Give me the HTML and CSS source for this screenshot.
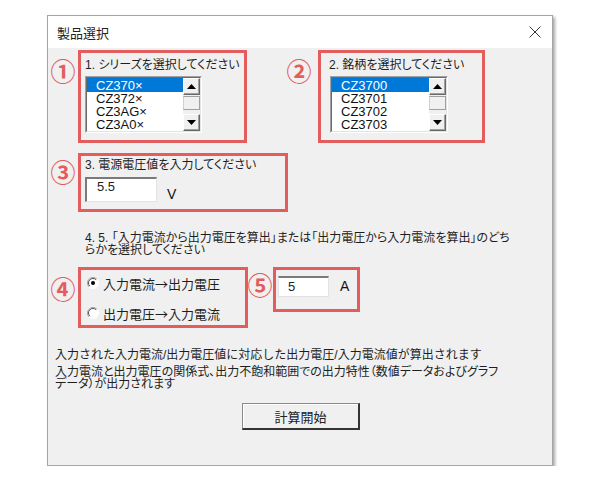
FILE: index.html
```html
<!DOCTYPE html>
<html lang="ja">
<head>
<meta charset="utf-8">
<title>製品選択</title>
<link rel="stylesheet" href="styles.css">
</head>
<body>
<div class="page">
  <div class="dialog">
    <div class="titlebar">
      <span class="title">製品選択</span>
      <svg class="close" width="12" height="12" viewBox="0 0 12 12"><path d="M0.5 0.5 L11.5 11.5 M11.5 0.5 L0.5 11.5" stroke="#333" stroke-width="1" fill="none"/></svg>
    </div>
    <div class="body">
      <div class="row row1">
        <span class="num num1">①</span>
        <div class="box box1">
          <div class="label">1. シリーズを選択してください</div>
          <div class="listbox">
            <div class="listbox-inner">
              <ul class="items">
                <li class="sel">CZ370×</li>
                <li>CZ372×</li>
                <li>CZ3AG×</li>
                <li>CZ3A0×</li>
              </ul>
              <div class="scrollbar">
                <div class="sbtn"><svg width="9" height="5" viewBox="0 0 9 5"><polygon points="4.5,0 9,5 0,5" fill="#000"/></svg></div>
                <div class="track"><div class="thumb"></div></div>
                <div class="sbtn"><svg width="9" height="5" viewBox="0 0 9 5"><polygon points="0,0 9,0 4.5,5" fill="#000"/></svg></div>
              </div>
            </div>
          </div>
        </div>
        <span class="num num2">②</span>
        <div class="box box2">
          <div class="label">2. 銘柄を選択してください</div>
          <div class="listbox listbox2">
            <div class="listbox-inner">
              <ul class="items">
                <li class="sel">CZ3700</li>
                <li>CZ3701</li>
                <li>CZ3702</li>
                <li>CZ3703</li>
              </ul>
              <div class="scrollbar">
                <div class="sbtn"><svg width="9" height="5" viewBox="0 0 9 5"><polygon points="4.5,0 9,5 0,5" fill="#000"/></svg></div>
                <div class="track"><div class="thumb"></div></div>
                <div class="sbtn"><svg width="9" height="5" viewBox="0 0 9 5"><polygon points="0,0 9,0 4.5,5" fill="#000"/></svg></div>
              </div>
            </div>
          </div>
        </div>
      </div>

      <div class="row row2">
        <span class="num num3">③</span>
        <div class="box box3">
          <div class="label">3. 電源電圧値を入力してください</div>
          <div class="field-row">
            <div class="textbox">5.5</div>
            <span class="unit unit-v">V</span>
          </div>
        </div>
      </div>

      <div class="note">4. 5. 「入力電流から出力電圧を算出」または「出力電圧から入力電流を算出」のどち<br>らかを選択してください</div>

      <div class="row row4">
        <span class="num num4">④</span>
        <div class="box box4">
          <div class="radio">
            <svg width="12" height="12" viewBox="0 0 12 12"><circle cx="6" cy="6" r="5.5" fill="#fff"/><path d="M2.1 9.9 A5.5 5.5 0 0 1 9.9 2.1" stroke="#a0a0a0" fill="none"/><path d="M9.9 2.1 A5.5 5.5 0 0 1 2.1 9.9" stroke="#fff" fill="none"/><path d="M2.8 9.2 A4.5 4.5 0 0 1 9.2 2.8" stroke="#555" fill="none"/><circle cx="6" cy="6" r="2" fill="#000"/></svg>
            <span>入力電流→出力電圧</span>
          </div>
          <div class="radio">
            <svg width="12" height="12" viewBox="0 0 12 12"><circle cx="6" cy="6" r="5.5" fill="#fff"/><path d="M2.1 9.9 A5.5 5.5 0 0 1 9.9 2.1" stroke="#a0a0a0" fill="none"/><path d="M9.9 2.1 A5.5 5.5 0 0 1 2.1 9.9" stroke="#fff" fill="none"/><path d="M2.8 9.2 A4.5 4.5 0 0 1 9.2 2.8" stroke="#555" fill="none"/></svg>
            <span>出力電圧→入力電流</span>
          </div>
        </div>
        <span class="num num5">⑤</span>
        <div class="box box5">
          <div class="textbox tb5">5</div>
          <span class="unit unit-a">A</span>
        </div>
      </div>

      <div class="desc1">入力された入力電流/出力電圧値に対応した出力電圧/入力電流値が算出されます</div>
      <div class="desc2">入力電流と出力電圧の関係式、出力不飽和範囲での出力特性（数値データおよびグラフ<br>データ）が出力されます</div>

      <div class="actions">
        <button class="btn" type="button">計算開始</button>
      </div>
    </div>
  </div>
</div>
</body>
</html>
```

FILE: styles.css
```css
* { box-sizing: border-box; }

body {
  margin: 0;
  background: #fff;
  font-family: "Liberation Sans", "Noto Sans CJK JP", sans-serif;
  color: #1e1e1e;
}

.page {
  padding: 15px 0 0 47px;
}

.dialog {
  width: 506px;
  height: 451px;
  border: 1px solid #a5a5a5;
  box-shadow: 2px 2px 3px rgba(0, 0, 0, 0.35);
  background: #f0f0f0;
  display: flex;
  flex-direction: column;
}

.titlebar {
  height: 32px;
  flex-shrink: 0;
  background: #fff;
  display: flex;
  align-items: center;
  justify-content: space-between;
  padding: 0 11px 0 9px;
}

.title {
  font-family: "Noto Sans CJK JP", sans-serif;
  font-size: 13px;
  color: #222;
}

.body {
  flex: 1;
  padding: 2px 0 0 4px;
  font-size: 12px;
}

.row {
  display: flex;
  align-items: flex-start;
}

.num {
  width: 22px;
  height: 22px;
  display: flex;
  align-items: center;
  justify-content: center;
  font-family: "Noto Sans CJK JP", sans-serif;
  font-size: 25px;
  font-weight: 700;
  line-height: 22px;
  color: #e35d5d;
  flex-shrink: 0;
}

.box {
  border: 3px solid #e35d5d;
  flex-shrink: 0;
}

.num1 { margin-top: 9px; }
.box1 { width: 169px; height: 93px; margin-left: 4px; padding: 5px 0 0 4px; }
.num2 { margin: 9px 8px 0 41px; }
.box2 { width: 167px; height: 93px; padding: 5px 0 0 8px; }

.label {
  font-size: 12px;
  line-height: 14px;
  white-space: nowrap;
  font-feature-settings: "palt";
}

.listbox {
  margin-top: 4px;
  width: 117px;
  height: 57px;
  border-top: 1px solid #a0a0a0;
  border-left: 1px solid #a0a0a0;
  border-right: 1px solid #fff;
  border-bottom: 1px solid #fff;
}

.listbox2 { margin-left: 1px; width: 118px; }

.listbox-inner {
  height: 100%;
  display: flex;
  border-top: 1px solid #696969;
  border-left: 1px solid #696969;
  border-right: 1px solid #e3e3e3;
  border-bottom: 1px solid #e3e3e3;
  background: #fff;
}

.items {
  list-style: none;
  margin: 0;
  padding: 0;
  flex: 1;
  font-family: "Liberation Sans", sans-serif;
  font-size: 13px;
  line-height: 13px;
  color: #111;
}

.items li {
  height: 13px;
  padding-left: 9px;
  white-space: nowrap;
}

.items li.sel {
  height: 14px;
  line-height: 15px;
  background: #0078d7;
  color: #fff;
}

.scrollbar {
  width: 17px;
  display: flex;
  flex-direction: column;
  background: #f0f0f0;
}

.sbtn {
  height: 17px;
  display: flex;
  align-items: center;
  justify-content: center;
  background: #f0f0f0;
  border-top: 1px solid #fff;
  border-left: 1px solid #fff;
  border-right: 1px solid #696969;
  border-bottom: 1px solid #696969;
  box-shadow: inset -1px -1px 0 #a0a0a0;
}

.track {
  flex: 1;
  padding-top: 1px;
}

.thumb {
  height: 14px;
  border-top: 1px solid #a0a0a0;
  border-left: 1px solid #d0d0d0;
  border-right: 1px solid #a0a0a0;
  border-bottom: 1px solid #a0a0a0;
  background: #f0f0f0;
}

.row2 { margin-top: 10px; }
.num3 { margin-top: 7px; }
.box3 { width: 210px; height: 59px; margin-left: 4px; padding: 2px 0 0 4px; }

.field-row {
  display: flex;
  align-items: flex-end;
  margin-top: 5px;
}

.textbox {
  width: 72px;
  height: 25px;
  background: #fff;
  border-top: 2px solid #7a7a7a;
  border-left: 2px solid #7a7a7a;
  border-right: 1px solid #e3e3e3;
  border-bottom: 1px solid #e3e3e3;
  font-family: "Liberation Sans", sans-serif;
  font-size: 13px;
  line-height: 14px;
  padding: 1px 0 0 10px;
  color: #222;
}

.unit {
  font-family: "Liberation Sans", sans-serif;
  font-size: 14px;
  color: #111;
}

.unit-v {
  margin-left: 10px;
  line-height: 16px;
}

.note {
  margin-top: 20px;
  padding-left: 33px;
  font-size: 12px;
  line-height: 12px;
  white-space: nowrap;
  font-feature-settings: "palt";
}

.row4 { margin-top: 11px; }
.num4 { margin-top: 10px; }
.box4 { width: 170px; height: 61px; margin-left: 4px; padding: 4px 0 0 6px; }

.radio {
  display: flex;
  align-items: center;
  gap: 4px;
  height: 18px;
  font-family: "Noto Sans CJK JP", sans-serif;
  font-size: 13px;
  white-space: nowrap;
}

.radio + .radio { margin-top: 12px; }

.num5 { margin: 6px 2px 0 1px; }

.box5 {
  width: 87px;
  height: 45px;
  padding: 6px 0 0 2px;
  display: flex;
  align-items: flex-start;
}

.tb5 {
  width: 51px;
  height: 21px;
  border-left: 1px solid #e3e3e3;
  padding: 2px 0 0 9px;
}

.unit-a {
  margin-left: 11px;
  line-height: 21px;
}

.desc1 {
  margin-top: 20px;
  padding-left: 3px;
  font-size: 12px;
  line-height: 14px;
  white-space: nowrap;
}

.desc2 {
  margin-top: 4px;
  padding-left: 3px;
  font-size: 12px;
  line-height: 12px;
  white-space: nowrap;
  font-feature-settings: "palt";
}

.actions {
  display: flex;
  justify-content: center;
  margin-top: 13px;
}

.btn {
  width: 118px;
  height: 27px;
  margin-right: 2px;
  background: #f0f0f0;
  border-top: 1px solid #8a8a8a;
  border-left: 1px solid #8a8a8a;
  border-right: 2px solid #333;
  border-bottom: 2px solid #333;
  box-shadow: inset 1px 1px 0 #fff;
  font-family: "Noto Sans CJK JP", sans-serif;
  font-size: 13px;
  color: #222;
  padding: 0;
}
```
